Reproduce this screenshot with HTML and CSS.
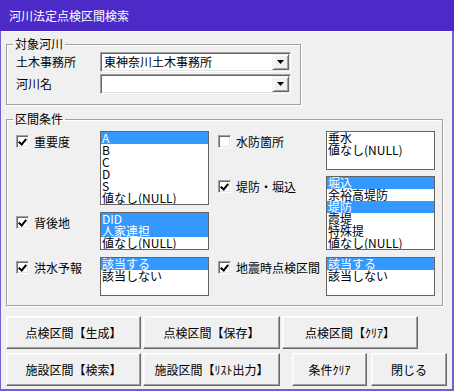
FILE: index.html
```html
<!DOCTYPE html>
<html lang="ja">
<head>
  <meta charset="UTF-8" />
  <title>河川法定点検区間検索</title>
  <link rel="stylesheet" href="styles.css">
</head>
<body>

<div class="window">
  <div class="titlebar">河川法定点検区間検索</div>

  <div class="client">
    <fieldset class="group river">
      <legend>対象河川</legend>
      <div class="form-grid">
        <label>土木事務所</label>
        <div class="combo">
          <span class="combo-text">東神奈川土木事務所</span>
          <span class="drop"><svg width="7" height="4" viewBox="0 0 7 4"><polygon points="0,0 7,0 3.5,4" fill="#000"/></svg></span>
        </div>
        <label>河川名</label>
        <div class="combo">
          <span class="combo-text"></span>
          <span class="drop"><svg width="7" height="4" viewBox="0 0 7 4"><polygon points="0,0 7,0 3.5,4" fill="#000"/></svg></span>
        </div>
      </div>
    </fieldset>

    <fieldset class="group cond">
      <legend>区間条件</legend>
      <div class="cols">
        <div class="col left">
          <div class="item">
            <div class="cap"><span class="chk on"></span><span class="cap-text">重要度</span></div>
            <div class="list h74">
              <div class="opt sel">A</div>
              <div class="opt">B</div>
              <div class="opt">C</div>
              <div class="opt">D</div>
              <div class="opt">S</div>
              <div class="opt">値なし(NULL)</div>
            </div>
          </div>
          <div class="item">
            <div class="cap"><span class="chk on"></span><span class="cap-text">背後地</span></div>
            <div class="list h38">
              <div class="opt sel">DID</div>
              <div class="opt sel">人家連担</div>
              <div class="opt">値なし(NULL)</div>
            </div>
          </div>
          <div class="item">
            <div class="cap"><span class="chk on"></span><span class="cap-text">洪水予報</span></div>
            <div class="list h39">
              <div class="opt sel">該当する</div>
              <div class="opt">該当しない</div>
            </div>
          </div>
        </div>

        <div class="col right">
          <div class="item">
            <div class="cap"><span class="chk"></span><span class="cap-text">水防箇所</span></div>
            <div class="list h39">
              <div class="opt">垂水</div>
              <div class="opt">値なし(NULL)</div>
            </div>
          </div>
          <div class="item">
            <div class="cap"><span class="chk on"></span><span class="cap-text">堤防・堀込</span></div>
            <div class="list h74">
              <div class="opt sel">堀込</div>
              <div class="opt">余裕高堤防</div>
              <div class="opt sel">堤防</div>
              <div class="opt">霞堤</div>
              <div class="opt">特殊提</div>
              <div class="opt">値なし(NULL)</div>
            </div>
          </div>
          <div class="item">
            <div class="cap"><span class="chk on"></span><span class="cap-text">地震時点検区間</span></div>
            <div class="list h39">
              <div class="opt sel focus">該当する</div>
              <div class="opt">該当しない</div>
            </div>
          </div>
        </div>
      </div>
    </fieldset>

    <div class="btn-row">
      <button class="btn w135">点検区間【生成】</button>
      <button class="btn w137">点検区間【保存】</button>
      <button class="btn w136">点検区間【ｸﾘｱ】</button>
    </div>
    <div class="btn-row second">
      <button class="btn w135">施設区間【検索】</button>
      <button class="btn w137">施設区間【ﾘｽﾄ出力】</button>
      <button class="btn w75 push">条件ｸﾘｱ</button>
      <button class="btn w76">閉じる</button>
    </div>
  </div>
</div>

</body>
</html>
```

FILE: styles.css
```css
body {
  margin: 0;
  background: #f0f0f0;
  font-family: "Noto Sans CJK JP", "Noto Sans", sans-serif;
  font-size: 12px;
  color: #000;
}
.window {
  width: 454px;
  height: 391px;
}
.titlebar {
  height: 31px;
  line-height: 31px;
  padding-left: 9px;
  background: #4b2ac8;
  color: #fff;
  font-size: 12px;
}
.client {
  box-sizing: border-box;
  height: 360px;
  background: #f0f0f0;
  border-left: 1px solid #7a5dcc;
  border-right: 2px solid #7a5dcc;
  border-bottom: 2px solid #7a5dcc;
  box-shadow: inset 0 1px 0 #fbfbfb;
  padding-top: 7px;
}
.group {
  box-sizing: border-box;
  margin: 0 0 0 5px;
  border: 1px solid #a0a0a0;
  box-shadow: inset 1px 1px 0 #fff, 1px 1px 0 #fff;
  min-inline-size: 0;
}
.group legend {
  padding: 0 2px;
  margin-left: -3px;
  line-height: 12px;
  font-size: 12px;
}
.river {
  width: 295px;
  padding: 2px 0 10px 9px;
}
.form-grid {
  display: grid;
  grid-template-columns: 84px 191px;
  grid-auto-rows: 20px;
  row-gap: 2px;
  align-items: center;
}
.form-grid label {
  line-height: 12px;
}
.combo {
  box-sizing: border-box;
  height: 20px;
  display: flex;
  background: #fff;
  border: 1px solid;
  border-color: #a0a0a0 #fff #fff #a0a0a0;
  box-shadow: inset 1px 1px 0 #696969, inset -1px -1px 0 #e3e3e3;
  padding: 1px;
}
.combo-text {
  flex: 1;
  padding-left: 2px;
  line-height: 16px;
  white-space: nowrap;
}
.drop {
  box-sizing: border-box;
  width: 17px;
  height: 16px;
  background: #f0f0f0;
  border: 1px solid;
  border-color: #f0f0f0 #696969 #696969 #f0f0f0;
  box-shadow: inset 1px 1px 0 #fff, inset -1px -1px 0 #a0a0a0;
  display: flex;
  align-items: center;
  justify-content: center;
}
.cond {
  width: 437px;
  margin-top: 8px;
  padding: 6px 0 9px 9px;
}
.cols {
  display: flex;
  gap: 9px;
}
.col {
  display: flex;
  flex-direction: column;
}
.col.left { gap: 7px; }
.col.right { gap: 6px; }
.col.right .item + .item + .item { margin-top: 1px; }
.item {
  display: flex;
  align-items: flex-start;
}
.cap {
  display: flex;
  align-items: center;
  margin-top: 4px;
  height: 13px;
}
.left .cap { width: 84px; }
.right .cap { width: 108px; }
.cap-text {
  margin-left: 5px;
  line-height: 13px;
  white-space: nowrap;
}
.chk {
  box-sizing: border-box;
  width: 13px;
  height: 13px;
  background: #fff;
  border: 1px solid;
  border-color: #a0a0a0 #fff #fff #a0a0a0;
  box-shadow: inset 1px 1px 0 #696969, inset -1px -1px 0 #e3e3e3;
  flex: none;
  position: relative;
}
.chk.on::after {
  content: "";
  position: absolute;
  left: 3px;
  top: 1px;
  width: 3px;
  height: 6px;
  border-right: 2px solid #000;
  border-bottom: 2px solid #000;
  transform: rotate(40deg);
}
.list {
  box-sizing: border-box;
  width: 109px;
  background: #fff;
  border: 1px solid #646464;
  overflow: hidden;
}
.h74 { height: 74px; }
.h38 { height: 38px; }
.h39 { height: 39px; }
.opt {
  height: 12px;
  line-height: 12px;
  padding-left: 1px;
  white-space: nowrap;
}
.opt.sel {
  background: #3399ff;
  color: #fff;
}
.opt.focus {
  outline: 1px dotted #e07a1f;
  outline-offset: -1px;
}
.btn-row {
  display: flex;
  gap: 2px;
  margin: 10px 0 0 5px;
}
.btn-row.second {
  margin-top: 4px;
}
.btn {
  box-sizing: border-box;
  height: 33px;
  padding: 0;
  background: #f0f0f0;
  border: 1px solid;
  border-color: #fff #696969 #696969 #fff;
  box-shadow: inset -1px -1px 0 #a0a0a0, inset 1px 1px 0 #f8f8f8;
  font-family: "Noto Sans CJK JP", "Noto Sans", sans-serif;
  font-size: 12px;
  color: #000;
}
.w135 { width: 135px; }
.w137 { width: 137px; }
.w136 { width: 136px; }
.w75 { width: 75px; }
.w76 { width: 76px; }
.second .w137 + .push { margin-left: 10px; }
.second .w75 + .w76 { margin-left: 2px; }
```
